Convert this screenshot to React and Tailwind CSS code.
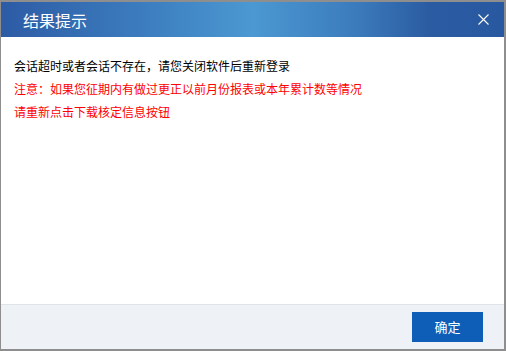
export default function App() {
  return (
    <div
      className="w-[506px] h-[351px] bg-[#8e8e8e] pt-[2px] pl-[1px] pr-[2px] pb-[2px] flex flex-col"
      style={{ fontFamily: '"Noto Sans CJK SC", "Noto Sans", sans-serif' }}
    >
      <div className="h-[35px] shrink-0 flex items-center justify-between pl-[22px] pr-[15px] bg-[linear-gradient(90deg,#2d5ba5_0%,#3d7fc0_30%,#4b98d2_50%,#3c7cbd_70%,#2b5ca2_85%,#2858a0_100%)]">
        <span className="text-white text-[16px] leading-none">结果提示</span>
        <svg width="11" height="11" viewBox="0 0 11 11" className="text-white">
          <path d="M0.5 0.5 L10.5 10.5 M10.5 0.5 L0.5 10.5" stroke="currentColor" strokeWidth="1.1" fill="none" />
        </svg>
      </div>
      <div className="flex-1 bg-white pt-[17px] px-[13px] text-[12px] leading-[23px]">
        <p className="text-black">会话超时或者会话不存在，请您关闭软件后重新登录</p>
        <p className="text-[#ff0000]">注意：如果您征期内有做过更正以前月份报表或本年累计数等情况</p>
        <p className="text-[#ff0000]">请重新点击下载核定信息按钮</p>
      </div>
      <div className="h-[45px] shrink-0 border-t border-[#dfe4ea] bg-[#eef1f6] flex items-center justify-end pr-[21px]">
        <button className="w-[71px] h-[30px] bg-[#0e5eb8] text-white text-[13px]">确定</button>
      </div>
    </div>
  );
}
